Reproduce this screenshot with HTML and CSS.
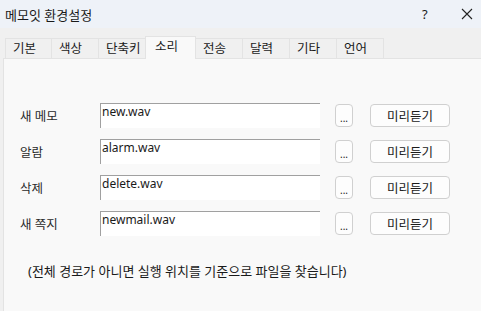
FILE: index.html
```html
<!DOCTYPE html>
<html lang="ko">
<head>
  <meta charset="UTF-8" />
  <title>메모잇 환경설정</title>
  <link rel="stylesheet" href="styles.css">
</head>
<body>
  <div class="window">
    <div class="titlebar">
      <span class="title">메모잇 환경설정</span>
      <span class="help">?</span>
      <span class="close">
        <svg width="12" height="12" viewBox="0 0 12 12">
          <path d="M1 1 L11 11 M11 1 L1 11" stroke="#222" stroke-width="1.1" fill="none" />
        </svg>
      </span>
    </div>

    <div class="body">
      <div class="tabs">
        <div class="tab">기본</div>
        <div class="tab">색상</div>
        <div class="tab">단축키</div>
        <div class="tab active">소리</div>
        <div class="tab">전송</div>
        <div class="tab">달력</div>
        <div class="tab">기타</div>
        <div class="tab">언어</div>
      </div>

      <div class="panel">
        <div class="row">
          <span class="label">새 메모</span>
          <div class="field">new.wav</div>
          <button class="browse">...</button>
          <button class="preview">미리듣기</button>
        </div>
        <div class="row">
          <span class="label">알람</span>
          <div class="field">alarm.wav</div>
          <button class="browse">...</button>
          <button class="preview">미리듣기</button>
        </div>
        <div class="row">
          <span class="label">삭제</span>
          <div class="field">delete.wav</div>
          <button class="browse">...</button>
          <button class="preview">미리듣기</button>
        </div>
        <div class="row">
          <span class="label">새 쪽지</span>
          <div class="field">newmail.wav</div>
          <button class="browse">...</button>
          <button class="preview">미리듣기</button>
        </div>

        <p class="note">(전체 경로가 아니면 실행 위치를 기준으로 파일을 찾습니다)</p>
      </div>
    </div>
  </div>
</body>
</html>
```

FILE: styles.css
```css
body {
  margin: 0;
  font-family: "Noto Sans", "Noto Sans CJK KR", sans-serif;
  font-size: 12.5px;
  color: #1a1a1a;
}
.window {
  width: 481px;
  height: 311px;
  overflow: hidden;
  display: flex;
  flex-direction: column;
  background-color: #f0f0f0;
}
.titlebar {
  height: 28px;
  display: flex;
  align-items: center;
  background-color: #eef2f8;
  padding-left: 5px;
}
.title {
  font-size: 13px;
  flex: 1;
}
.help {
  font-size: 13px;
  width: 8px;
  margin-right: 31px;
}
.close {
  display: flex;
  margin-right: 8px;
}
.body {
  flex: 1;
  display: flex;
  flex-direction: column;
  padding-top: 8px;
}
.tabs {
  display: flex;
  align-items: flex-end;
  margin-left: 5px;
  height: 22px;
  position: relative;
  z-index: 1;
}
.tab {
  width: 47px;
  height: 20px;
  box-sizing: border-box;
  border: 1px solid #e3e3e3;
  border-bottom: none;
  border-left: none;
  padding-left: 7px;
  line-height: 19px;
  background-color: #f0f0f0;
}
.tab:first-child {
  border-left: 1px solid #e3e3e3;
}
.tab.active {
  width: 51px;
  height: 23px;
  background-color: #f9f9f9;
  border-left: 1px solid #e3e3e3;
  margin-left: -1px;
  margin-bottom: -1px;
  line-height: 20px;
  padding-left: 9px;
}
.panel {
  flex: 1;
  margin-left: 3px;
  background-color: #f9f9f9;
  border-top: 1px solid #e3e3e3;
  border-left: 1px solid #e3e3e3;
  padding: 44px 0 0 16px;
}
.row {
  display: flex;
  align-items: center;
  height: 25px;
  margin-bottom: 11px;
}
.label {
  width: 80px;
  color: #2a2a2a;
}
.field {
  width: 220px;
  height: 25px;
  box-sizing: border-box;
  background-color: #fff;
  border-top: 1px solid #a0a0a0;
  border-left: 1px solid #a0a0a0;
  padding: 0 1px;
  line-height: 16px;
  font-size: 12px;
}
button {
  font-family: "Noto Sans", "Noto Sans CJK KR", sans-serif;
  font-size: 12.5px;
  color: #1a1a1a;
  background-color: #fdfdfd;
  border: 1px solid #d0d0d0;
  border-radius: 4px;
  height: 23px;
  padding: 0;
}
.browse {
  width: 18px;
  margin-left: 15px;
  line-height: 26px;
  font-size: 10px;
}
.preview {
  width: 80px;
  margin-left: 17px;
}
.note {
  font-size: 13px;
  margin: 25px 0 0 8px;
}
```
